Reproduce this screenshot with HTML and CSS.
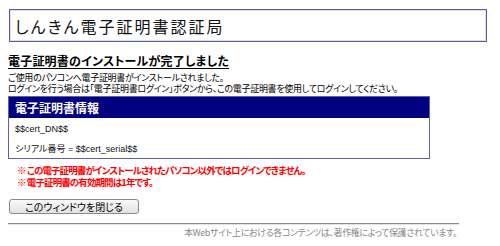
FILE: index.html
```html
<!DOCTYPE html>
<html lang="ja">
<head>
<meta charset="utf-8">
<link rel="stylesheet" href="styles.css">
</head>
<body>
<div class="title-box"><span class="title">しんきん電子証明書認証局</span></div>
<h1 class="heading">電子証明書のインストールが完了しました</h1>
<p class="intro">ご使用のパソコンへ電子証明書がインストールされました。<br>ログインを行う場合は「電子証明書ログイン」ボタンから、この電子証明書を使用してログインしてください。</p>
<div class="info">
  <div class="info-head">電子証明書情報</div>
  <div class="info-body">
    <div class="info-row">$$cert_DN$$</div>
    <div class="info-row">シリアル番号 = $$cert_serial$$</div>
  </div>
</div>
<div class="notes">
  <div class="note">※ この電子証明書がインストールされたパソコン以外ではログインできません。</div>
  <div class="note">※ 電子証明書の有効期間は1年です。</div>
</div>
<button class="close-btn" type="button">このウィンドウを閉じる</button>
<div class="footer">
  <div class="rule"></div>
  <div class="copy">本Webサイト上における各コンテンツは、著作権によって保護されています。</div>
</div>
</body>
</html>
```

FILE: styles.css
```css
html, body {
  margin: 0;
  padding: 0;
  background: #ffffff;
}
body {
  padding: 9px 0 0 8px;
  font-family: "Noto Sans CJK JP", "DejaVu Sans", sans-serif;
  font-feature-settings: "palt";
  color: #000;
  width: 492px;
  box-sizing: border-box;
}
.title-box {
  margin-left: 1px;
  width: 471px;
  height: 31px;
  border: 1px solid #5a5aaa;
  box-shadow: inset 0 0 0 1px #dcdcf0;
  display: flex;
  align-items: center;
  padding-left: 5px;
  box-sizing: content-box;
}
.title {
  font-size: 16px;
  letter-spacing: 2px;
  color: #111;
  font-weight: 400;
}
.heading {
  margin: 11px 0 0 0;
  font-size: 12px;
  line-height: 16px;
  font-weight: 700;
  text-decoration: underline;
  text-underline-offset: 2px;
  letter-spacing: 0.2px;
}
.intro {
  margin: 3px 0 0 0;
  font-size: 9px;
  line-height: 11px;
  letter-spacing: -0.3px;
}
.info {
  margin-top: 2px;
  width: 420px;
  border: 1px solid #6060a8;
}
.info-head {
  background: #000080;
  color: #fff;
  font-weight: 700;
  font-size: 12px;
  line-height: 21px;
  padding-left: 6px;
}
.info-body {
  display: flex;
  flex-direction: column;
  gap: 9px;
  padding: 6px 0 3px 6px;
  font-size: 9px;
  line-height: 11px;
  font-family: "Liberation Sans", "Noto Sans CJK JP", sans-serif;
  color: #111;
}
.notes {
  margin-top: 5px;
  padding-left: 9px;
  color: #ff0000;
  font-weight: 700;
  font-size: 9.5px;
  line-height: 12px;
  letter-spacing: -0.9px;
}
.close-btn {
  display: block;
  margin: 11px 0 0 1px;
  width: 130px;
  height: 15px;
  box-sizing: border-box;
  padding: 0;
  border: 1px solid #8a8a8a;
  border-radius: 3px;
  background: linear-gradient(#fafafa, #e2e2e2);
  font-family: "Noto Sans CJK JP", sans-serif;
  font-feature-settings: "palt";
  font-size: 10px;
  line-height: 13px;
  color: #000;
}
.footer {
  width: 451px;
  margin-top: 9px;
}
.rule {
  height: 2px;
  background: #8c8c8c;
  border-bottom: 1px solid #e4e4e4;
  box-sizing: border-box;
}
.copy {
  text-align: right;
  font-size: 9px;
  line-height: 12px;
  color: #8a8a8a;
  margin-top: 2px;
  padding-right: 2px;
  letter-spacing: -0.4px;
}
```
